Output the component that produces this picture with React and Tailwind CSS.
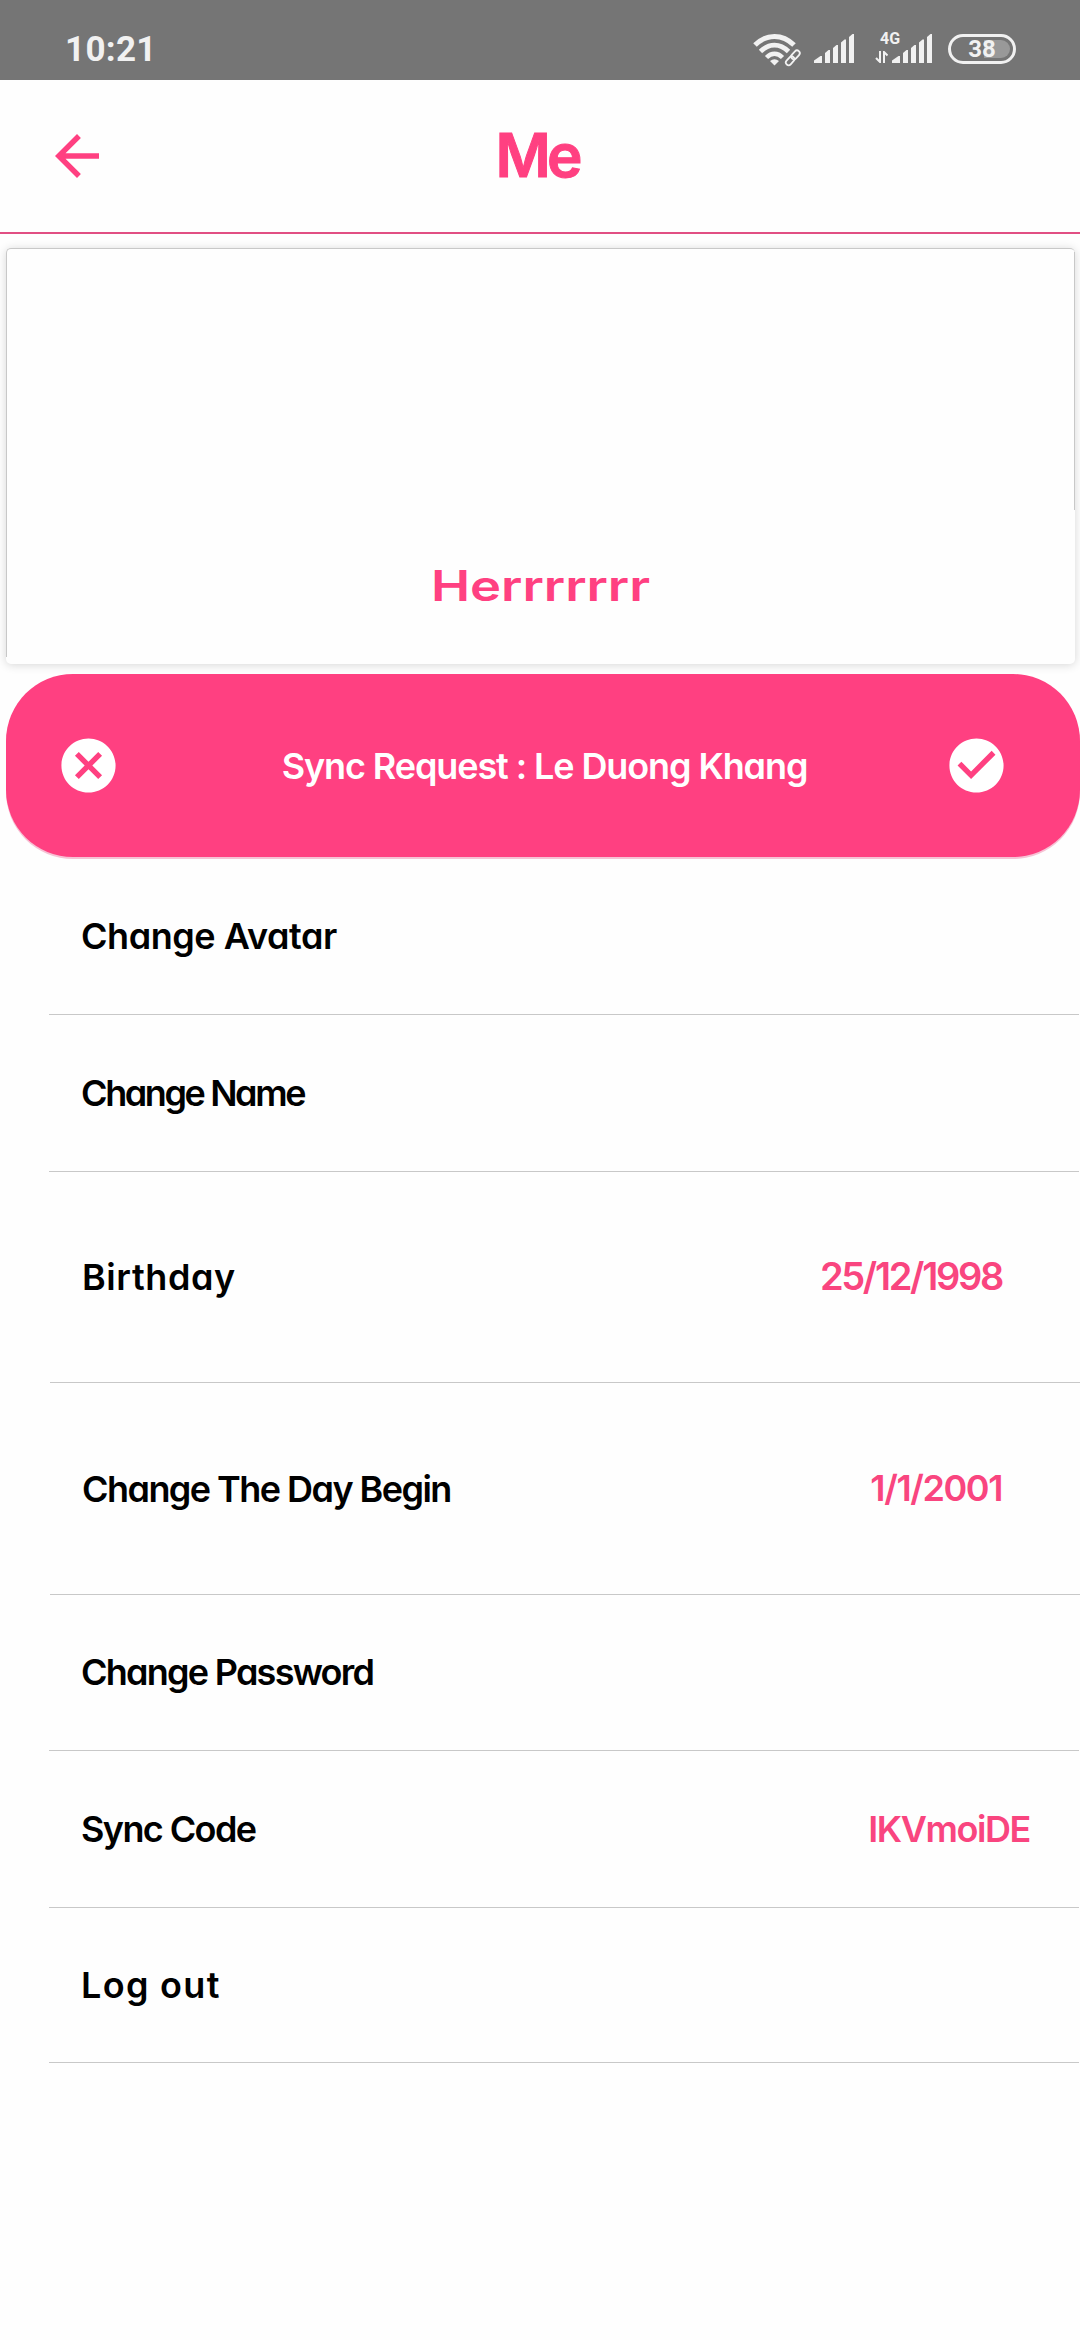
const rows = [
  { label: 'Change Avatar', size: 'h-[141px] ml-[49px] mr-px pb-4', track: 'tracking-[-0.45px]' },
  { label: 'Change Name', size: 'h-[157px] ml-[49px] mr-px', track: 'tracking-[-2.4px]' },
  { label: 'Birthday', size: 'h-[211px] ml-[50px]', track: 'tracking-[0.6px]', value: '25/12/1998', valueStyle: 'text-[38px] tracking-[-2.3px] mr-[78px] pb-0.5' },
  { label: 'Change The Day Begin', size: 'h-[212px] ml-[50px]', track: 'tracking-[-1.55px]', value: '1/1/2001', valueStyle: 'text-[36px] tracking-[-1.4px] mr-[78px] pb-0.5' },
  { label: 'Change Password', size: 'h-[156px] ml-[49px] mr-px pb-0.5', track: 'tracking-[-1.75px]' },
  { label: 'Sync Code', size: 'h-[157px] ml-[49px] mr-px', track: 'tracking-[-1.6px]', value: 'IKVmoiDE', valueStyle: 'text-[36px] tracking-[-1.4px] mr-[49px]' },
  { label: 'Log out', size: 'h-[155px] ml-[49px] mr-px', track: 'tracking-[1.3px]' },
];

function Wifi() {
  return (
    <svg className="h-[34px] w-[50px]" viewBox="0 0 50 34" fill="none" stroke="#f1f1f1">
      <path d="M2 12C13.500 0.500 29.500 0.500 41 12" strokeWidth="5" />
      <path d="M7.500 18.500C16 10 27 10 35.500 18.500" strokeWidth="4.800" />
      <path d="M13.500 24.500C18.500 19.500 24.500 19.500 29.500 24.500" strokeWidth="4.500" />
      <path d="M17 28Q21.500 24.500 26 28L21.500 32.500Z" fill="#f1f1f1" stroke="none" />
      <g transform="rotate(-48 40 25)" strokeWidth="1.800">
        <rect x="31" y="22" width="10" height="5.500" rx="2.750" />
        <rect x="39" y="22" width="10" height="5.500" rx="2.750" />
      </g>
    </svg>
  );
}

function Signal() {
  return (
    <svg className="h-[29px] w-10" viewBox="0 0 40 29" fill="#f1f1f1">
      <path d="M0 29V26.500L6.500 22H8V29Z" />
      <path d="M11 29V19L14.500 16H16V29Z" />
      <path d="M19 29V14L22.500 11H24V29Z" />
      <path d="M27 29V8.500L30.500 5.500H32V29Z" />
      <path d="M35 29V3L38.500 0H40V29Z" />
    </svg>
  );
}

function StatusBar() {
  return (
    <header className="flex h-20 items-start bg-[#757575] font-[Roboto] font-bold text-[#f1f1f1]">
      <div className="mt-[29px] ml-[65px] h-10 text-[35px] leading-[41px] tracking-[0.3px]">10:21</div>
      <div className="mt-[33px] mr-16 ml-auto flex items-start">
        <Wifi />
        <div className="mt-px ml-[11px]"><Signal /></div>
        <div className="ml-[21px] w-[17px]">
          <div className="-mt-1 ml-[5px] h-[22px] text-[16px] leading-[19px]">4G</div>
          <svg className="h-3 w-[13px]" viewBox="0 0 13 12" fill="none" stroke="#f1f1f1" strokeWidth="2">
            <path d="M5 0V11L1 7M9 12V1L12.500 4.500" />
          </svg>
        </div>
        <div className="mt-px"><Signal /></div>
        <div className="relative mt-px ml-4 h-[30px] w-[68px] rounded-full border-3 border-[#f1f1f1]">
          <div className="absolute top-[3px] right-[3px] h-[18px] w-[26px] rounded-r-full bg-[#999]" />
          <div className="absolute inset-0 text-center text-[24px] leading-[25px]">38</div>
        </div>
      </div>
    </header>
  );
}

export default function App() {
  return (
    <div className="flex h-[2340px] w-[1080px] flex-col overflow-hidden bg-[#fefefe] font-[Inter,sans-serif] font-semibold [font-feature-settings:'cv11']">
      <StatusBar />
      <div className="grid h-[154px] shrink-0 grid-cols-[110px_1fr_110px] items-start border-b-2 border-[#e14f83] text-[#ff4081]">
        <svg className="mt-[43px] ml-11 size-[66px]" viewBox="0 0 24 24" fill="#ff4081">
          <path d="M20 11H7.830l5.590-5.590L12 4l-8 8 8 8 1.410-1.410L7.830 13H20v-2z" />
        </svg>
        <h1 className="mt-[39px] pr-1.5 text-center text-[60px] leading-[72px] tracking-[-4px] [-webkit-text-stroke:1px_#ff4081]">Me</h1>
      </div>

      <section className="relative mt-[14px] mr-[5px] ml-[6px] h-[416px] shrink-0 rounded-[5px] bg-[#fefefe] shadow-[0_1px_10px_rgba(0,0,0,0.16)]">
        <div className="absolute inset-x-0 top-0 h-[409px] rounded-t-[5px] border-t border-l border-[#c8c8c8]" />
        <div className="absolute top-1 right-0 h-[258px] w-px bg-[#c8c8c8]" />
        <p className="scale-x-125 pt-[314px] text-center text-[42px] leading-[48px] text-[#ff4081]">Herrrrrrr</p>
      </section>

      <section className="relative mt-[10px] ml-[6px] flex h-[183px] shrink-0 items-center justify-between rounded-[67px] bg-[#ff4081] pr-[71px] pl-[50px] text-white shadow-[0_2px_0_#f6c3d5]">
        <svg className="size-[65px]" viewBox="0 0 24 24" fill="#fff">
          <path d="M12 2C6.470 2 2 6.470 2 12s4.470 10 10 10 10-4.470 10-10S17.530 2 12 2zm5 13.590L15.590 17 12 13.410 8.410 17 7 15.590 10.590 12 7 8.410 8.410 7 12 10.590 15.590 7 17 8.410 13.410 12 17 15.590z" />
        </svg>
        <p className="pl-6 text-[36px] leading-[48px] tracking-[-1.1px]">Sync Request : Le Duong Khang</p>
        <svg className="size-[65px]" viewBox="0 0 24 24" fill="#fff">
          <path d="M12 2C6.480 2 2 6.480 2 12s4.480 10 10 10 10-4.480 10-10S17.520 2 12 2zm-2 15l-5-5 1.410-1.410L10 14.170l7.590-7.590L19 8l-9 9z" />
        </svg>
      </section>

      <ul className="mt-[17px]">
        {rows.map((row) => (
          <li key={row.label} className={`flex items-center justify-between border-b border-[#c8c8c8] pl-8 ${row.size}`}>
            <span className={`text-[36px] leading-[48px] text-black ${row.track}`}>{row.label}</span>
            {row.value && <span className={`leading-[48px] text-[#f9457f] ${row.valueStyle}`}>{row.value}</span>}
          </li>
        ))}
      </ul>
    </div>
  );
}
